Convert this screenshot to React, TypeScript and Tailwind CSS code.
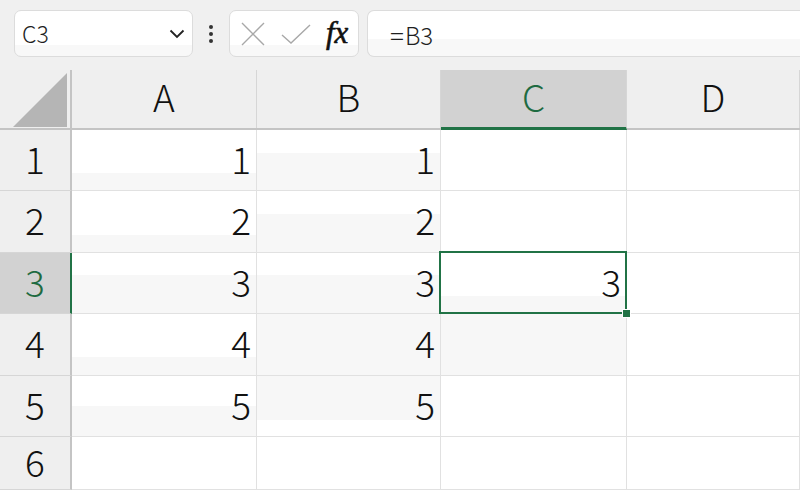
import React from "react";

const green = "#217346";
const font = { fontFamily: '"Noto Sans CJK JP", "Noto Sans", sans-serif' };

const cols = ["A", "B", "C", "D"];
const colW = ["w-[185px]", "w-[184px]", "w-[186px]", "flex-1"];

// faint lower bands seen in the screenshot, per row for columns A..D
const bands: Record<number, string[]> = {
  1: ["bg-[linear-gradient(to_bottom,#fff_72%,#f7f7f7_72%)]", "bg-[linear-gradient(to_bottom,#fff_38%,#f7f7f7_38%)]", "bg-white", "bg-white"],
  2: ["bg-[linear-gradient(to_bottom,#fff_72%,#f7f7f7_72%)]", "bg-[linear-gradient(to_bottom,#fff_38%,#f7f7f7_38%)]", "bg-white", "bg-white"],
  3: ["bg-[linear-gradient(to_bottom,#fff_36%,#f7f7f7_36%)]", "bg-[linear-gradient(to_bottom,#fff_36%,#f7f7f7_36%)]", "bg-[linear-gradient(to_bottom,#fff_72%,#f7f7f7_72%)]", "bg-white"],
  4: ["bg-[linear-gradient(to_bottom,#fff_70%,#f7f7f7_70%)]", "bg-[#f7f7f7]", "bg-[#f7f7f7]", "bg-white"],
  5: ["bg-[linear-gradient(to_bottom,#fff_50%,#f7f7f7_50%)]", "bg-[linear-gradient(to_bottom,#f7f7f7_74%,#fff_74%)]", "bg-white", "bg-white"],
  6: ["bg-white", "bg-white", "bg-white", "bg-white"],
};

const rowH = ["h-[61px]", "h-[62px]", "h-[61px]", "h-[62px]", "h-[61px]", "h-[53px]"];

function Toolbar() {
  return (
    <div className="h-[70px] bg-[#f0f0f0] flex items-start pt-[10px] pl-[14px] font-light" style={font}>
      <div className="w-[179px] h-[47px] rounded-[7px] border border-[#dcdcdc] bg-[linear-gradient(to_bottom,#fff_75%,#f8f8f8_75%)] flex items-center pl-[7px] pr-[7px]">
        <span className="text-[23px] text-[#1f1f1f] flex-1 leading-none">C3</span>
        <svg width="16" height="10" viewBox="0 0 16 10">
          <path d="M1.5 1.5 L8 8 L14.5 1.5" fill="none" stroke="#222" strokeWidth="1.8" />
        </svg>
      </div>
      <div className="w-[36px] h-[47px] flex flex-col items-center justify-center gap-[3px]">
        <span className="w-[4px] h-[4px] rounded-full bg-[#333]" />
        <span className="w-[4px] h-[4px] rounded-full bg-[#333]" />
        <span className="w-[4px] h-[4px] rounded-full bg-[#333]" />
      </div>
      <div className="w-[130px] h-[47px] rounded-[7px] border border-[#dcdcdc] bg-[linear-gradient(to_bottom,#fff_75%,#f8f8f8_75%)] flex items-center pl-[10px]">
        <svg width="26" height="26" viewBox="0 0 26 26">
          <path d="M2 2 L24 24 M24 2 L2 24" stroke="#a8a8a8" strokeWidth="1.4" />
        </svg>
        <svg width="30" height="22" viewBox="0 0 30 22" className="ml-[15px]">
          <path d="M1 12 L10 20 L29 2" fill="none" stroke="#a8a8a8" strokeWidth="1.4" />
        </svg>
        <span
          className="ml-[15px] text-[31px] italic font-normal text-[#111] leading-none -mt-[3px] [-webkit-text-stroke:0.6px_#111]"
          style={{ fontFamily: '"Liberation Serif", "DejaVu Serif", serif' }}
        >
          fx
        </span>
      </div>
      <div className="ml-[8px] flex-1 h-[47px] rounded-l-[7px] border border-r-0 border-[#dcdcdc] bg-[linear-gradient(to_bottom,#fff_62%,#f8f8f8_62%)] flex items-center pl-[22px]">
        <span className="text-[24px] text-[#1f1f1f] leading-none">
          <span className="text-[26px] mr-[1px] relative top-[1px]">=</span>B3
        </span>
      </div>
    </div>
  );
}

function HeaderRow() {
  return (
    <div className="flex h-[60px] bg-[#efefef] border-b-2 border-[#c4c4c4]">
      <div className="w-[72px] border-r-2 border-[#c4c4c4] flex items-end justify-end pr-[3px] pb-[1px]">
        <svg width="54" height="54" viewBox="0 0 54 54">
          <path d="M54 0 L54 54 L0 54 Z" fill="#b5b5b5" />
        </svg>
      </div>
      {cols.map((c, i) => {
        const sel = c === "C";
        return (
          <div
            key={c}
            className={`${colW[i]} flex items-center justify-center pb-[5px] text-[37px] border-r border-[#d6d6d6] ${
              sel ? "bg-[#d2d2d2] text-[#1e6b41] border-b-[3px] border-b-[#217346] -mb-[2px]" : "text-[#111]"
            }`}
          >
            <span className="leading-none">{c}</span>
          </div>
        );
      })}
    </div>
  );
}

function Row({ n }: { n: number }) {
  const sel = n === 3;
  return (
    <div className={`flex ${rowH[n - 1]}`}>
      <div
        className={`w-[72px] flex items-center justify-center pb-[4px] text-[37px] border-b border-[#d6d6d6] border-r-2 ${
          sel ? "bg-[#d2d2d2] text-[#1e6b41] border-r-[#217346]" : "bg-[#efefef] text-[#111] border-r-[#c4c4c4]"
        }`}
      >
        <span className="leading-none">{n}</span>
      </div>
      {cols.map((c, i) => {
        const val = n <= 5 && (c === "A" || c === "B") ? n : c === "C" && n === 3 ? 3 : null;
        const active = c === "C" && n === 3;
        return (
          <div
            key={c}
            className={`${colW[i]} ${bands[n][i]} relative flex items-center justify-end pr-[5px] pb-[4px] text-[37px] text-[#111] border-r border-b border-[#e1e1e1] ${
              active ? "z-10" : ""
            }`}
          >
            {val !== null && <span className="leading-none">{val}</span>}
            {active && (
              <>
                <div className="absolute -left-[2px] -top-[2px] -right-[1px] -bottom-[1px] border-2 border-[#217346]" />
                <div
                  className="absolute -right-[5px] -bottom-[5px] w-[9px] h-[9px] border border-white"
                  style={{ background: green }}
                />
              </>
            )}
          </div>
        );
      })}
    </div>
  );
}

export default function App() {
  return (
    <div className="w-[800px] h-[490px] overflow-hidden bg-white font-light" style={font}>
      <Toolbar />
      <HeaderRow />
      {[1, 2, 3, 4, 5, 6].map((n) => (
        <Row key={n} n={n} />
      ))}
    </div>
  );
}
